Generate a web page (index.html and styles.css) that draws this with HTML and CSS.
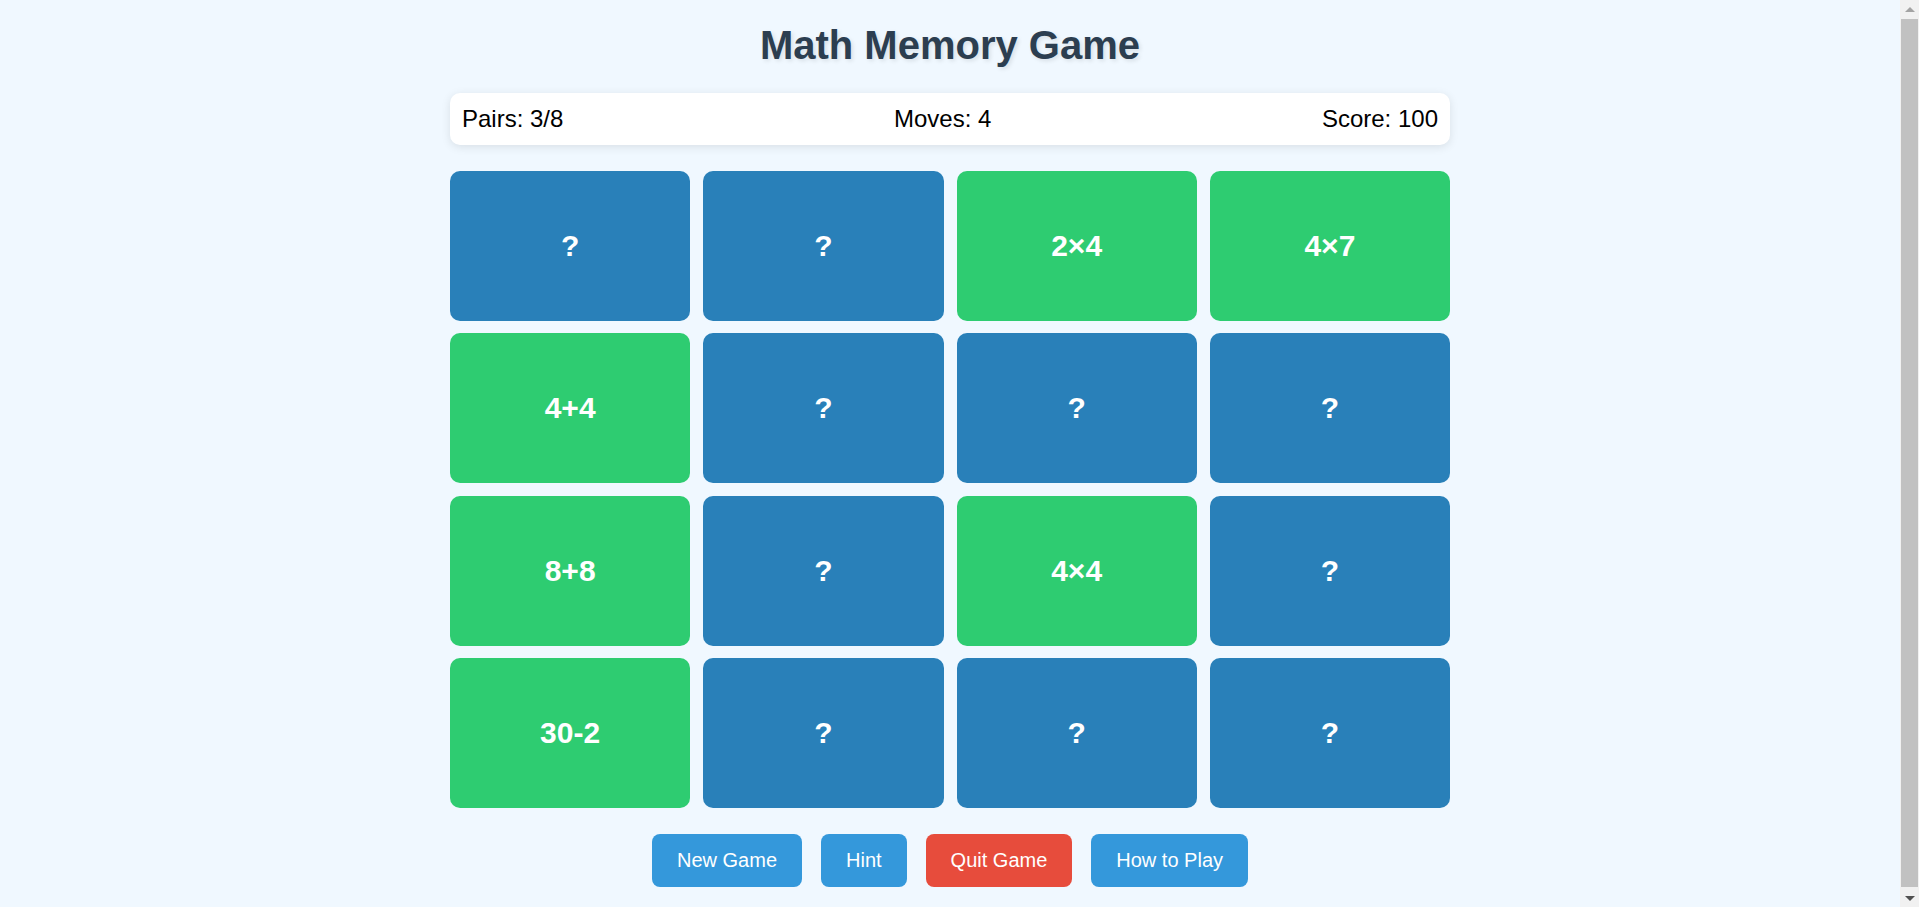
FILE: index.html
```html
<!DOCTYPE html>
<html lang="en">
<head>
<meta charset="utf-8">
<title>Math Memory Game</title>
<link rel="stylesheet" href="styles.css">
</head>
<body>
<div class="app">
  <h1 class="title">Math Memory Game</h1>
  <div class="stats">
    <span>Pairs: 3/8</span>
    <span>Moves: 4</span>
    <span>Score: 100</span>
  </div>
  <div class="board">
    <div class="card">?</div>
    <div class="card">?</div>
    <div class="card matched">2×4</div>
    <div class="card matched">4×7</div>
    <div class="card matched">4+4</div>
    <div class="card">?</div>
    <div class="card">?</div>
    <div class="card">?</div>
    <div class="card matched">8+8</div>
    <div class="card">?</div>
    <div class="card matched">4×4</div>
    <div class="card">?</div>
    <div class="card matched">30-2</div>
    <div class="card">?</div>
    <div class="card">?</div>
    <div class="card">?</div>
  </div>
  <div class="controls">
    <button class="btn">New Game</button>
    <button class="btn">Hint</button>
    <button class="btn btn-danger">Quit Game</button>
    <button class="btn">How to Play</button>
  </div>
</div>
<div class="scrollbar" aria-hidden="true">
  <span class="sb-arrow sb-up"></span>
  <span class="sb-thumb"></span>
  <span class="sb-arrow sb-down"></span>
</div>
</body>
</html>
```
FILE: styles.css
```css
html, body {
  margin: 0;
  padding: 0;
}
body {
  background: #f0f8ff;
  font-family: "Liberation Sans", Arial, sans-serif;
  color: #000;
  padding-right: 19px;
}
.app {
  max-width: 1000px;
  margin: 0 auto;
  padding: 22px 0 26px;
}
.title {
  margin: 0 0 25px;
  text-align: center;
  font-size: 40px;
  font-weight: bold;
  line-height: 46px;
  color: #2c3e50;
  text-shadow: 2px 2px 4px rgba(0, 0, 0, 0.1);
}
.stats {
  display: flex;
  justify-content: space-between;
  align-items: center;
  background: #ffffff;
  border-radius: 10px;
  padding: 12.4px 12px;
  font-size: 24px;
  line-height: 27.6px;
  box-shadow: 0 2px 10px rgba(0, 0, 0, 0.1);
  margin-bottom: 25.5px;
}
.board {
  display: grid;
  grid-template-columns: repeat(4, 1fr);
  grid-auto-rows: 150px;
  row-gap: 12.5px;
  column-gap: 13px;
}
.card {
  display: flex;
  align-items: center;
  justify-content: center;
  background: #2980b9;
  color: #ffffff;
  border-radius: 10px;
  font-size: 30px;
  font-weight: bold;
}
.card.matched {
  background: #2ecc71;
}
.controls {
  display: flex;
  justify-content: center;
  gap: 19px;
  margin-top: 25.5px;
}
.btn {
  font-family: "Liberation Sans", Arial, sans-serif;
  font-size: 20px;
  line-height: 23px;
  padding: 15px 25px;
  border: none;
  border-radius: 8px;
  background: #3498db;
  color: #ffffff;
  cursor: pointer;
}
.btn-danger {
  background: #e74c3c;
}

/* emulated classic browser scrollbar */
.scrollbar {
  position: fixed;
  top: 0;
  right: 0;
  width: 19px;
  height: 100%;
  background: #f1f1f1;
  display: flex;
  flex-direction: column;
  align-items: center;
}
.sb-arrow {
  flex: 0 0 18px;
  display: flex;
  width: 100%;
}
.sb-up::before,
.sb-down::before {
  content: "";
  display: block;
  margin: auto;
  width: 0;
  height: 0;
  border-left: 5px solid transparent;
  border-right: 5px solid transparent;
}
.sb-up::before {
  border-bottom: 5px solid #a3a3a3;
}
.sb-down::before {
  border-top: 5px solid #505050;
}
.sb-thumb {
  flex: 1;
  width: 17px;
  margin: 1px 0 2px;
  background: #c1c1c1;
}
```
